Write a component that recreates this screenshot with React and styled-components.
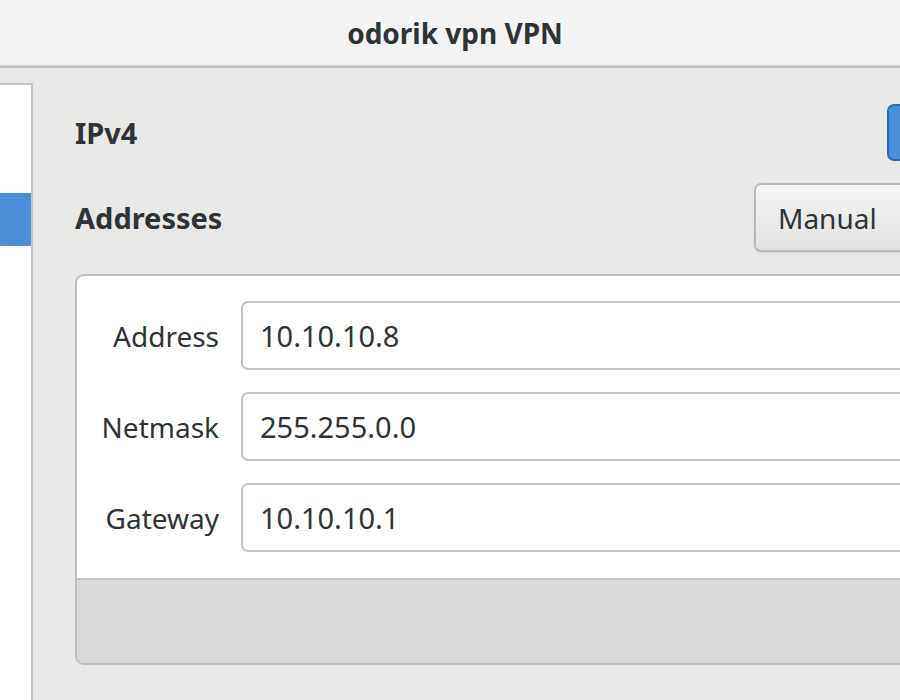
import React from "react";
import styled, { createGlobalStyle } from "styled-components";

const Global = createGlobalStyle`
  html, body { margin: 0; padding: 0; }
  body {
    width: 900px; height: 700px; overflow: hidden;
    background: #e8e8e7;
    font-family: "Noto Sans", "DejaVu Sans", sans-serif;
    color: #2e3436;
  }
`;

const Window = styled.div`
  width: 1029px;
  height: 700px;
  display: flex;
  flex-direction: column;
  background: #e8e8e7;
`;

const TitleBar = styled.div`
  height: 66px;
  flex: none;
  display: flex;
  align-items: center;
  justify-content: center;
  padding-right: 119px;
  background: linear-gradient(#f5f5f5, #f1f1f1);
  border-bottom: 2px solid #bdbdbb;
  box-shadow: inset 0 -1px 0 #d6d6d4;
`;

const Title = styled.span`
  font-size: 28px;
  font-weight: 700;
  color: #2e3436;
`;

const Body = styled.div`
  flex: 1;
  display: flex;
  padding-top: 15px;
  min-height: 0;
`;

const Sidebar = styled.div`
  width: 31px;
  flex: none;
  background: #ffffff;
  border-top: 2px solid #c4c4c2;
  border-right: 2px solid #c4c4c2;
  display: flex;
  flex-direction: column;
  padding-top: 108px;
`;

const SideRow = styled.div`
  height: 53px;
  background: ${(p) => (p.$selected ? "#4a90d9" : "transparent")};
`;

const Main = styled.div`
  flex: 1;
  padding: 21px 42px 0 42px;
  display: flex;
  flex-direction: column;
`;

const HeaderRow = styled.div`
  display: flex;
  align-items: center;
  justify-content: space-between;
  margin-bottom: 22px;
`;

const Heading = styled.span`
  font-size: 29px;
  font-weight: 700;
  color: #2e3436;
`;

const Switch = styled.div`
  width: 100px;
  height: 57px;
  box-sizing: border-box;
  border-radius: 7px;
  background: #4a90d9;
  border: 2px solid #2b6cb0;
`;

const Combo = styled.div`
  width: 233px;
  height: 69px;
  box-sizing: border-box;
  display: flex;
  align-items: center;
  padding-left: 22px;
  border: 2px solid #b8b8b6;
  border-radius: 7px;
  background: linear-gradient(#f4f4f4, #e2e2e1);
  box-shadow: 0 1px 1px rgba(0, 0, 0, 0.08);
  font-size: 28px;
  color: #2e3436;
`;

const Box = styled.div`
  border: 2px solid #bdbdbb;
  border-radius: 9px;
  overflow: hidden;
  display: flex;
  flex-direction: column;
`;

const Fields = styled.div`
  background: #ffffff;
  padding: 25px 0 26px 24px;
  display: grid;
  grid-template-columns: 118px 1fr;
  column-gap: 22px;
  row-gap: 22px;
  align-items: center;
`;

const Label = styled.span`
  text-align: right;
  font-size: 28px;
  color: #2e3436;
`;

const Entry = styled.div`
  height: 69px;
  box-sizing: border-box;
  display: flex;
  align-items: center;
  padding-left: 17px;
  border: 2px solid #c3c3c1;
  border-radius: 7px;
  background: #ffffff;
  font-size: 29px;
  color: #2e3436;
`;

const Footer = styled.div`
  height: 83px;
  background: #d9d9d8;
  border-top: 2px solid #c4c4c2;
`;

const fields = [
  ["Address", "10.10.10.8"],
  ["Netmask", "255.255.0.0"],
  ["Gateway", "10.10.10.1"],
];

export default function App() {
  return (
    <>
      <Global />
      <Window>
        <TitleBar>
          <Title>odorik vpn VPN</Title>
        </TitleBar>
        <Body>
          <Sidebar>
            <SideRow $selected />
          </Sidebar>
          <Main>
            <HeaderRow>
              <Heading>IPv4</Heading>
              <Switch />
            </HeaderRow>
            <HeaderRow>
              <Heading>Addresses</Heading>
              <Combo>Manual</Combo>
            </HeaderRow>
            <Box>
              <Fields>
                {fields.map(([l, v]) => (
                  <React.Fragment key={l}>
                    <Label>{l}</Label>
                    <Entry>{v}</Entry>
                  </React.Fragment>
                ))}
              </Fields>
              <Footer />
            </Box>
          </Main>
        </Body>
      </Window>
    </>
  );
}
